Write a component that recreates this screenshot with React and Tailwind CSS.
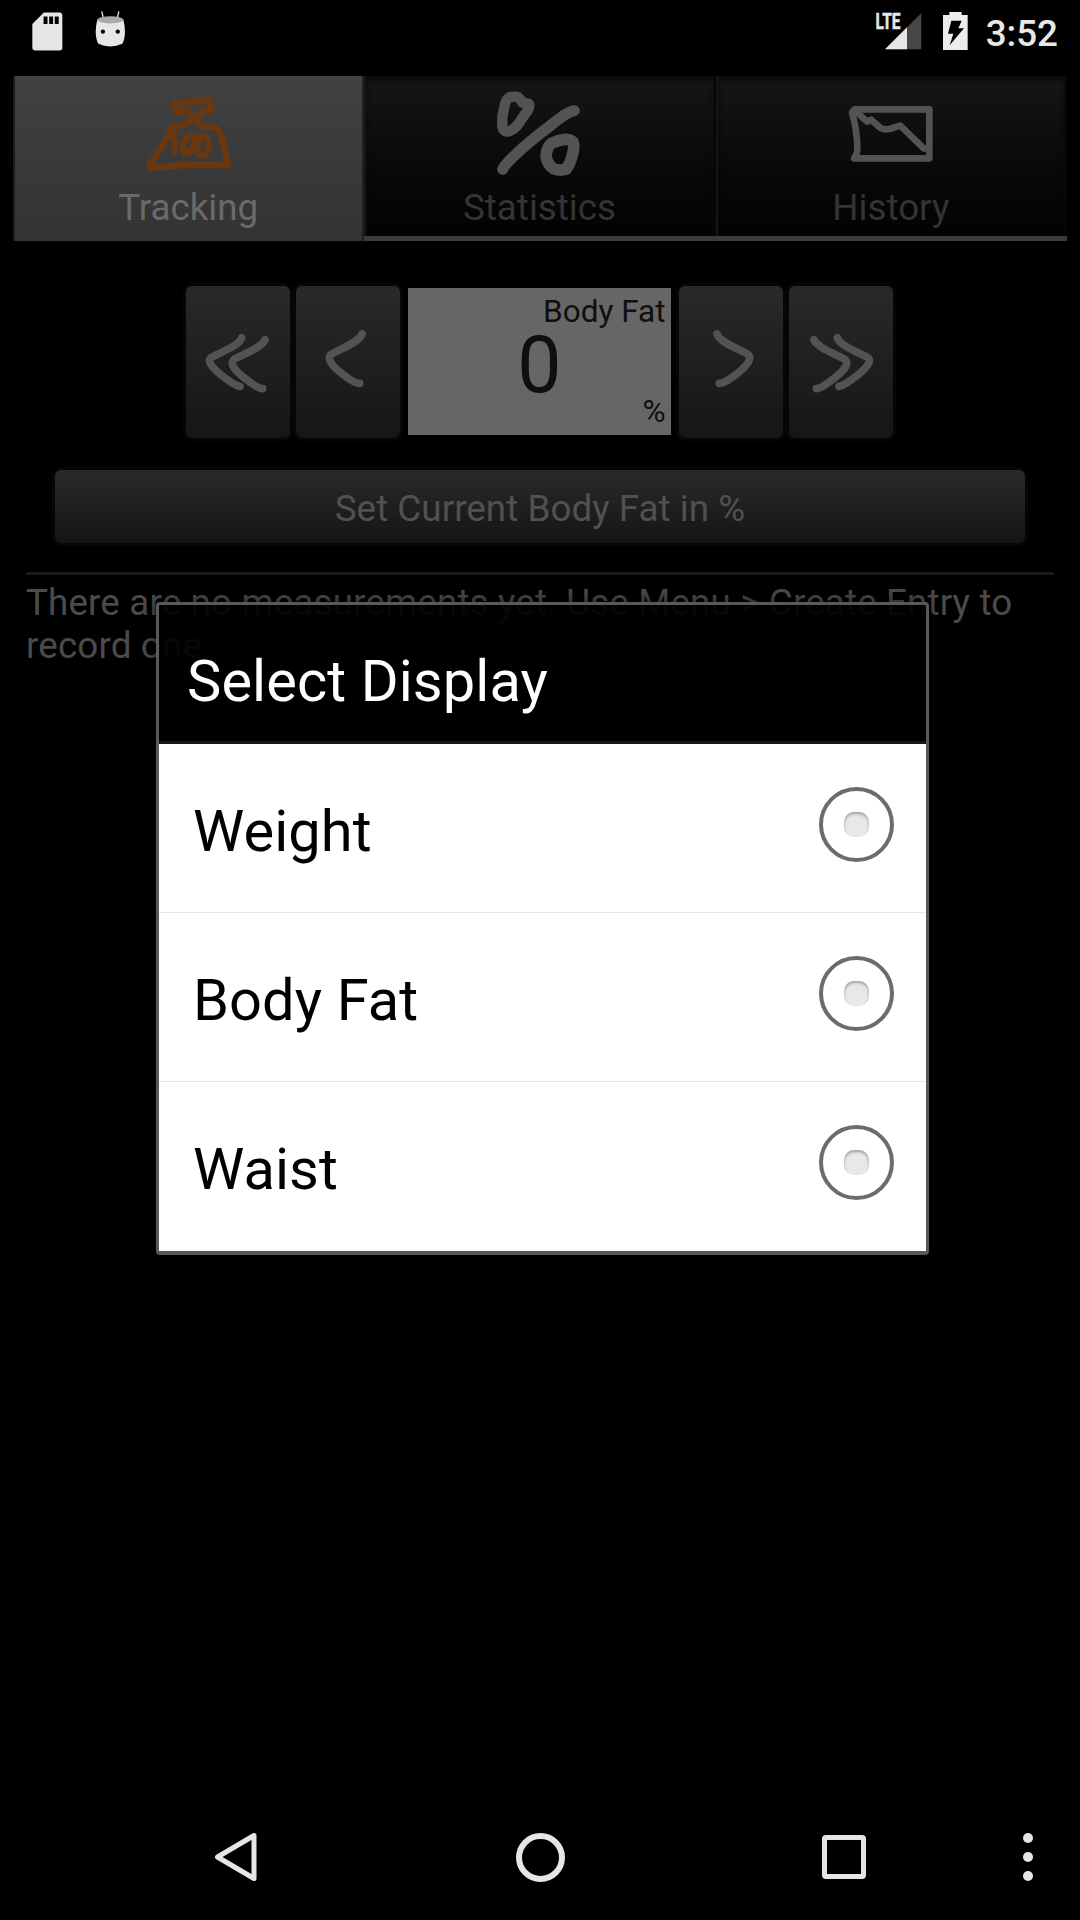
import React from "react";

function ScaleIcon() {
  return (
    <svg viewBox="2 0 270 270" className="h-[90px] w-[90px]" fill="none" stroke="#693710" strokeLinecap="round" strokeLinejoin="round">
      <path strokeWidth="20" d="M98 66 L94 36 L112 40 L150 34 L199 30 L202 46 L206 60 L177 60 L166 74 L164 98 L176 110 L212 111 Q225 114 232 138 Q246 172 253 226 L190 224 L120 225 L60 230 L20 233 L20 224 L45 188 L84 122 L82 113 L112 108 Q140 100 145 86 L143 75 L134 64 L118 63 Z" />
      <path strokeWidth="19" d="M92 132 L95 160 L94 186" />
      <path strokeWidth="19" d="M146 137 C128 138 115 160 118 180 C123 201 144 188 150 166 C154 150 160 138 146 137 Z" />
      <path strokeWidth="19" d="M178 140 C164 142 158 164 162 182 C167 202 186 200 195 178 C202 156 192 140 178 140 Z" />
    </svg>
  );
}

function PercentIcon() {
  return (
    <svg viewBox="405 90 270 270" className="h-[90px] w-[90px]" fill="none" stroke="#535353" strokeLinecap="round" strokeLinejoin="round">
      <path strokeWidth="31" d="M470 110 L450 111 Q438 116 434 136 L427 170 L427 200 Q432 220 450 213 Q472 202 484 178 L503 152 Q513 132 502 130 L487 128 Q480 114 470 110 Z" />
      <path strokeWidth="33" d="M643 152 C620 156 590 182 562 204 C522 234 480 270 452 298 C438 312 432 318 428 328" />
      <path strokeWidth="35" d="M608 239 Q628 236 639 246 Q645 256 637 286 Q630 312 619 327 Q600 334 580 326 Q561 312 558 288 Q560 262 574 250 Q592 242 608 239 Z" />
    </svg>
  );
}

function ChartIcon() {
  return (
    <svg viewBox="439 270 270 270" className="h-[90px] w-[90px]" fill="none" stroke="#535353" strokeWidth="20" strokeLinecap="round" strokeLinejoin="round">
      <path d="M465 328 H689 V475 H463 Q474 462 473 440 Q472 390 457 337 Z" />
      <path d="M468 333 L502 365 L514 359 L540 382 Q552 391 570 387 L602 377 L672 445 L686 446" />
    </svg>
  );
}

function Arrow({ double, flip }) {
  return (
    <svg viewBox="0 0 312 456" className={flip ? "h-[152px] w-[104px] -scale-x-100" : "h-[152px] w-[104px]"} fill="none" stroke="#535353" strokeWidth="23" strokeLinecap="round" strokeLinejoin="round">
      {double ? (
        <>
          <path d="M167 155 C162 173 132 187 103 201 C74 214 66 216 73 232 C84 255 120 278 139 291 Q152 300 162 301" />
          <path d="M237 161 C230 179 200 193 171 207 C143 220 134 222 141 240 C152 262 188 286 207 299 Q220 307 230 308" />
        </>
      ) : (
        <path d="M198 144 C192 162 163 176 134 190 C106 203 95 207 102 224 C112 247 148 271 168 284 Q181 293 191 292" />
      )}
    </svg>
  );
}

function StepButton({ double, flip }) {
  return (
    <button className="h-[158px] w-[110px] rounded-[9px] border-[3px] border-[#060606] bg-linear-to-b from-[#2a2a2a] to-[#151515] bg-origin-border">
      <Arrow double={double} flip={flip} />
    </button>
  );
}

function Tab({ label, active, children }) {
  return (
    <div
      className={
        active
          ? "flex h-[165px] flex-col items-center border-r-2 border-l-2 border-r-[#202020] border-l-[#1c1c1c] bg-linear-to-b from-[#414141] to-[#333333] pt-[14px] text-[#6a6a6a]"
          : "flex h-[160px] flex-col items-center border-r-2 border-l-2 border-r-[#050505] border-l-[#151515] bg-linear-to-b from-[#161616] to-[#030303] pt-[14px] text-[#343434] shadow-[inset_0_4px_5px_#0a0a0a]"
      }
    >
      {children}
      <div className="mt-[6px] pr-px text-[36.75px] leading-[43px]">{label}</div>
    </div>
  );
}

function StatusBar() {
  return (
    <header className="flex h-[76px] items-start justify-between pr-[22px] pl-[32px] text-[#e8e8e8]">
      <div className="flex gap-[32px] pt-[11px]">
        <svg viewBox="96 33 94 120" className="h-[40px] w-[31px]">
          <path fill="#e6e6e6" d="M132 37 H180 Q188 38 188 46 V143 Q188 152 179 152 H106 Q97 152 97 143 V72 Z" />
          <path fill="#000" d="M131 49h12v23h-12z M148 49h12v23h-12z M165 49h12v23h-12z" />
        </svg>
        <svg viewBox="285 33 94 120" className="h-[40px] w-[31px]">
          <path stroke="#e6e6e6" strokeWidth="4" strokeLinecap="round" d="M306 35 L311 57 M357 35 L352 57" />
          <path fill="#e6e6e6" d="M292 58 Q284 92 289 114 Q291 126 295 132 Q313 140 331 140 Q350 140 368 132 Q372 126 374 114 Q379 92 371 58 Z" />
          <ellipse cx="331.500" cy="59" rx="39" ry="11" fill="#a9a9a9" />
          <circle cx="309" cy="95" r="6.500" fill="#000" />
          <circle cx="354" cy="95" r="6.500" fill="#000" />
        </svg>
      </div>
      <div className="flex">
        <svg viewBox="0 0 46 40" className="mt-[12px] h-[40px] w-[46px] overflow-visible">
          <path fill="#464646" d="M45.300 1 V37.300 H9 Z" />
          <path fill="#e6e6e6" d="M31 15.300 V37.300 H9 Z" />
          <text x="-0.500" y="17" fill="#e8e8e8" stroke="#e8e8e8" strokeWidth="0.500" fontSize="21.500" fontWeight="700" textLength="25" lengthAdjust="spacingAndGlyphs">LTE</text>
        </svg>
        <svg viewBox="0 0 75 114" className="mt-[12px] ml-[21px] h-[38px] w-[25px]">
          <path fill="#ececec" d="M19 0 H56 V9 H74 V114 H0 V9 H19 Z" />
          <path fill="#000" d="M25 26 H56 L46 49 H63 L20 100 L31 65 H15 Z" />
        </svg>
        <div className="ml-[18px] text-[36.75px] leading-[67px] font-medium">3:52</div>
      </div>
    </header>
  );
}

function Option({ label, last }) {
  return (
    <div className={last ? "flex h-[169px] items-center justify-between pr-[32px] pb-px pl-[34px]" : "flex h-[169px] items-center justify-between border-b border-[#e8e8e8] pr-[32px] pl-[34px]"}>
      <span className="pt-[6px] text-[57.75px] leading-[68px] tracking-[0.1px] text-black">{label}</span>
      <span className="mb-[7px] flex h-[75px] w-[75px] items-center justify-center rounded-full border-4 border-[#6c6c6c]">
        <span className="h-[25px] w-[25px] rounded-[10px] bg-[#e8e8e8] shadow-[inset_0_2px_3px_#a0a0a0]" />
      </span>
    </div>
  );
}

function SelectDialog() {
  return (
    <section className="absolute top-[602px] left-[156px] w-[773px] rounded-[4px] border-[3px] border-b-4 border-[#595959] bg-black/90 shadow-[0_0_16px_rgba(0,0,0,0.6)]">
      <h2 className="h-[139px] border-b-[3px] border-[#171717] pt-[42px] pl-[28px] text-[57.75px] leading-[68px] tracking-[0.1px] text-white">Select Display</h2>
      <div className="bg-white">
        <Option label="Weight" />
        <Option label="Body Fat" />
        <Option label="Waist" last />
      </div>
    </section>
  );
}

function NavBar() {
  return (
    <nav className="mt-auto grid h-[126px] grid-cols-[84px_304px_304px_304px_63px] items-center justify-items-center text-[#e6e6e6]">
      <span />
      <svg viewBox="0 0 44 50" className="h-[50px] w-[44px]" fill="none" stroke="currentColor" strokeWidth="5" strokeLinejoin="round">
        <path d="M3.500 25 L40 3.500 V46.500 Z" />
      </svg>
      <span className="h-[49px] w-[49px] rounded-full border-[6px] border-current" />
      <span className="h-[44px] w-[44px] rounded-[4px] border-[5px] border-current" />
      <span className="flex flex-col gap-[9px]">
        <i className="h-[10px] w-[10px] rounded-full bg-current" />
        <i className="h-[10px] w-[10px] rounded-full bg-current" />
        <i className="h-[10px] w-[10px] rounded-full bg-current" />
      </span>
    </nav>
  );
}

export default function App() {
  return (
    <div className="relative flex h-[1920px] w-[1080px] flex-col overflow-hidden bg-black font-['Roboto',sans-serif]">
      <StatusBar />
      <div className="mx-[13px] grid h-[165px] grid-cols-3 bg-linear-to-b from-transparent from-[160px] to-[#3b3b3b] to-[160px]">
        <Tab label="Tracking" active><ScaleIcon /></Tab>
        <Tab label="Statistics"><PercentIcon /></Tab>
        <Tab label="History"><ChartIcon /></Tab>
      </div>
      <div className="mt-[42px] flex justify-center pr-[2px]">
        <StepButton double />
        <StepButton />
        <div className="mx-[5px] mt-[5px] flex h-[147px] w-[263px] flex-col bg-[#666666] pt-[5px] pr-[5px] text-[#0f0f0f]">
          <div className="text-right text-[31.5px] leading-[37px]">Body Fat</div>
          <div className="mt-[4px] pl-[6px] text-center text-[78.75px] leading-[62px]">0</div>
          <div className="text-right text-[31.5px] leading-[31px]">%</div>
        </div>
        <StepButton flip />
        <StepButton double flip />
      </div>
      <button className="mx-[52px] mt-[26px] h-[79px] rounded-[9px] border-[3px] border-[#060606] bg-linear-to-b from-[#2a2a2a] to-[#151515] pt-[4px] text-[36.75px] leading-[69px] tracking-[0.05px] text-[#515151]">
        Set Current Body Fat in %
      </button>
      <div className="mx-[26px] mt-[26px] h-[3px] bg-[#191919]" />
      <p className="mx-[26px] mt-[6px] text-[36.75px] leading-[43px] tracking-[0.15px] text-[#4b4b4b]">
        There are no measurements yet. Use Menu &gt; Create Entry to record one.
      </p>
      <SelectDialog />
      <NavBar />
    </div>
  );
}
